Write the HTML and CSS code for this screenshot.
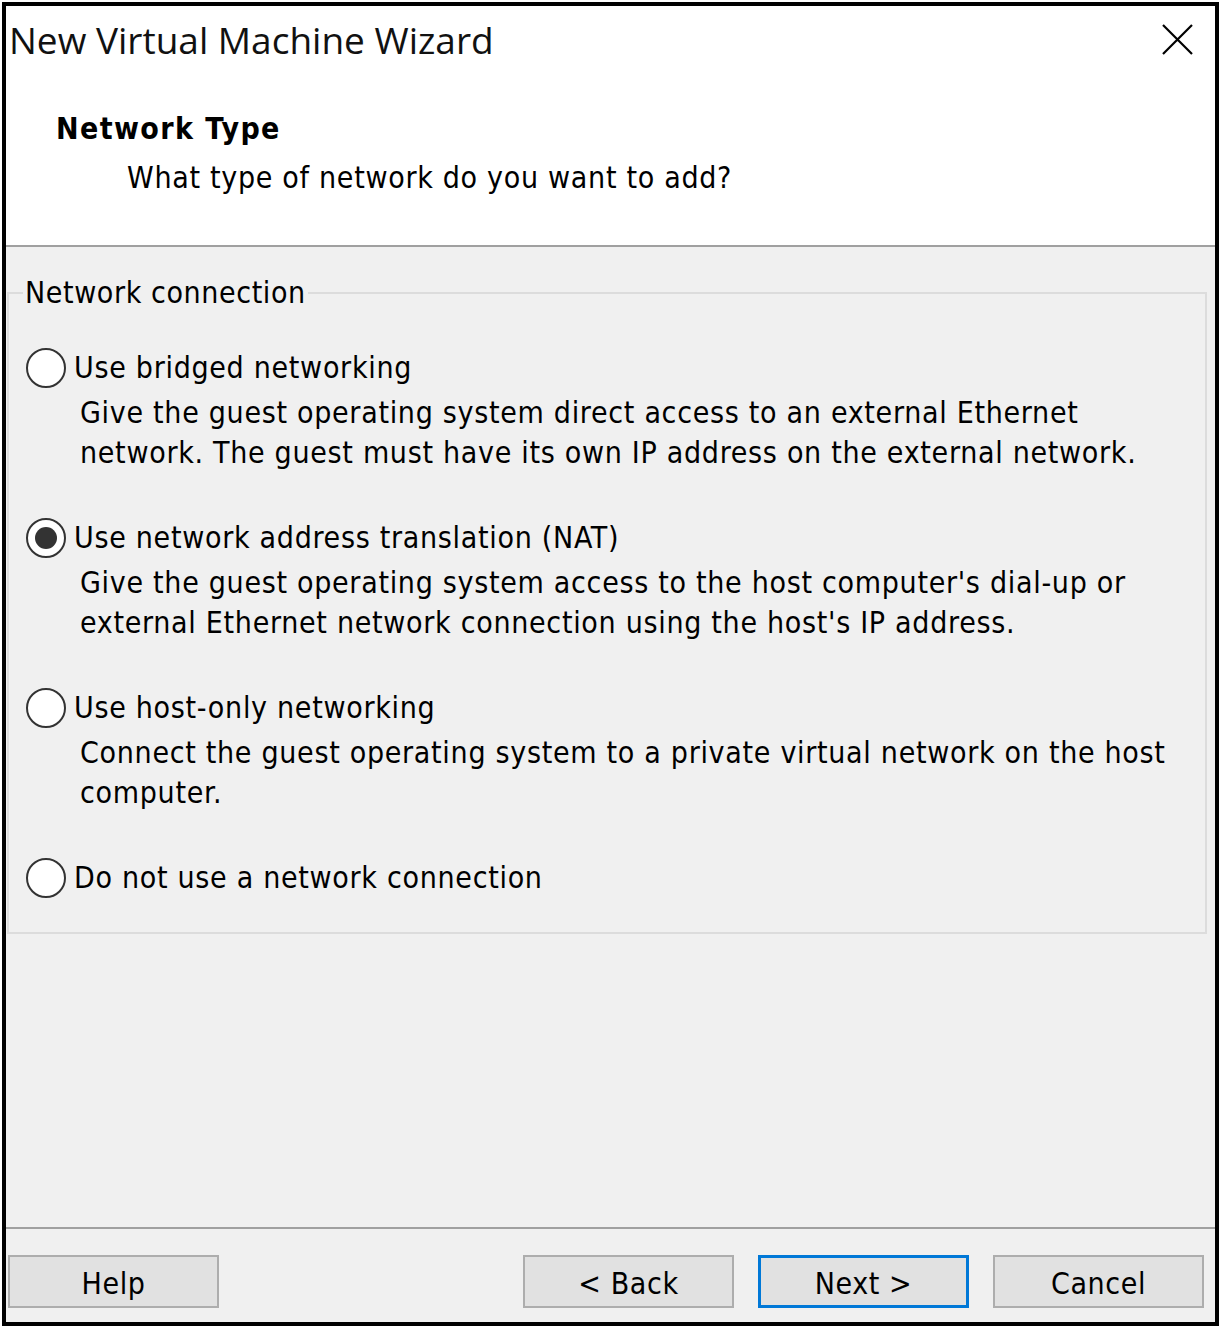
FILE: index.html
```html
<!DOCTYPE html>
<html lang="en">
<head>
<meta charset="utf-8">
<title>New Virtual Machine Wizard</title>
<link rel="stylesheet" href="styles.css">
</head>
<body>
<div class="dialog">
  <header class="header">
    <div class="titlebar">
      <span class="title">New Virtual Machine Wizard</span>
      <svg class="close" width="31" height="31" viewBox="0 0 31 31" aria-label="Close">
        <path d="M1 1 L30 30 M30 1 L1 30" stroke="#000" stroke-width="2.2" fill="none"/>
      </svg>
    </div>
    <div class="heading">Network Type</div>
    <div class="subheading">What type of network do you want to add?</div>
  </header>
  <main class="body">
    <fieldset class="group">
      <legend class="legend">Network connection</legend>
      <div class="option">
        <div class="option-label"><span class="radio"></span><span>Use bridged networking</span></div>
        <p class="desc">Give the guest operating system direct access to an external Ethernet<br>network. The guest must have its own IP address on the external network.</p>
      </div>
      <div class="option">
        <div class="option-label"><span class="radio checked"></span><span>Use network address translation (NAT)</span></div>
        <p class="desc">Give the guest operating system access to the host computer's dial-up or<br>external Ethernet network connection using the host's IP address.</p>
      </div>
      <div class="option">
        <div class="option-label"><span class="radio"></span><span>Use host-only networking</span></div>
        <p class="desc">Connect the guest operating system to a private virtual network on the host<br>computer.</p>
      </div>
      <div class="option last">
        <div class="option-label"><span class="radio"></span><span>Do not use a network connection</span></div>
      </div>
    </fieldset>
  </main>
  <footer class="footer">
    <button class="btn">Help</button>
    <div class="btn-group">
      <button class="btn">&lt; Back</button>
      <button class="btn default">Next &gt;</button>
      <button class="btn">Cancel</button>
    </div>
  </footer>
</div>
</body>
</html>
```

FILE: styles.css
```css
* { box-sizing: border-box; }

html, body {
  margin: 0;
  padding: 0;
  background: #ffffff;
}

body {
  font-family: "DejaVu Sans Condensed", "DejaVu Sans", sans-serif;
  font-stretch: condensed;
  color: #000;
  letter-spacing: 0.7px;
}

.dialog {
  margin: 2px 0 0 2px;
  width: 1217px;
  height: 1324px;
  border: 4px solid #000;
  display: flex;
  flex-direction: column;
  background: #f0f0f0;
}

.header {
  height: 241px;
  flex: none;
  background: #fff;
  border-bottom: 2px solid #a0a0a0;
  display: flex;
  flex-direction: column;
}

.titlebar {
  height: 66px;
  display: flex;
  align-items: center;
  justify-content: space-between;
  padding: 0 22px 0 3px;
}

.title {
  font-family: "Open Sans", "Noto Sans", sans-serif;
  font-stretch: normal;
  font-size: 37px;
  letter-spacing: 0;
  color: #111;
}

.close {
  display: block;
}

.heading {
  margin: 37px 0 0 50px;
  font-size: 30px;
  line-height: 40px;
  font-weight: bold;
  letter-spacing: 1.4px;
}

.subheading {
  margin: 9px 0 0 121px;
  font-size: 30px;
  line-height: 40px;
}

.body {
  flex: 1;
  background: #f0f0f0;
  border-bottom: 2px solid #a0a0a0;
  padding: 26px 8px 0 1px;
}

.group {
  margin: 0;
  border: 2px solid #dcdcdc;
  padding: 35px 0 34px 17px;
  min-width: 0;
}

.legend {
  margin-left: -3px;
  padding: 0 2px;
  font-size: 30px;
  line-height: 40px;
  letter-spacing: 0.6px;
}

.option {
  margin-bottom: 45px;
}

.option.last {
  margin-bottom: 0;
}

.option-label {
  display: flex;
  align-items: center;
  height: 40px;
  font-size: 30px;
  line-height: 40px;
  white-space: nowrap;
}

.radio {
  width: 40px;
  height: 40px;
  flex: none;
  border-radius: 50%;
  border: 2px solid #333;
  background: #fff;
  margin-right: 8px;
  display: flex;
  align-items: center;
  justify-content: center;
}

.radio.checked::after {
  content: "";
  width: 22px;
  height: 22px;
  border-radius: 50%;
  background: #333;
}

.desc {
  margin: 5px 0 0 54px;
  font-size: 30px;
  line-height: 40px;
  white-space: nowrap;
}

.footer {
  height: 93px;
  flex: none;
  display: flex;
  justify-content: space-between;
  align-items: flex-start;
  padding: 26px 11px 0 2px;
}

.btn-group {
  display: flex;
  gap: 24px;
}

.btn {
  width: 211px;
  height: 53px;
  background: #e1e1e1;
  border: 2px solid #adadad;
  font-family: "DejaVu Sans Condensed", "DejaVu Sans", sans-serif;
  font-stretch: condensed;
  font-size: 30px;
  letter-spacing: 0.6px;
  color: #000;
  padding: 4px 0 0 0;
  margin: 0;
}

.btn.default {
  border: 3px solid #0078d7;
}
```
